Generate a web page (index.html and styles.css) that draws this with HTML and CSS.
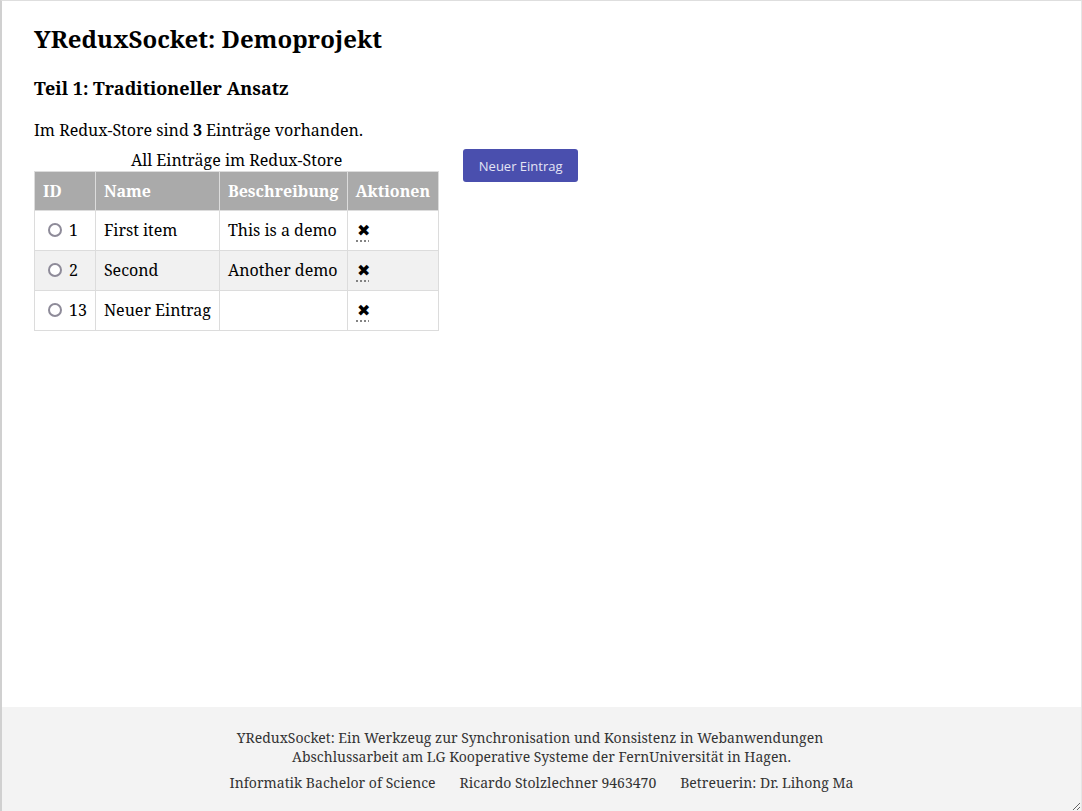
FILE: index.html
```html
<!DOCTYPE html>
<html lang="de">
<head>
<meta charset="utf-8">
<title>YReduxSocket: Demoprojekt</title>
<link rel="stylesheet" href="styles.css">
</head>
<body>
<div class="frame">
  <main class="content">
    <h1 class="title">YReduxSocket: Demoprojekt</h1>
    <h2 class="subtitle">Teil 1: Traditioneller Ansatz</h2>
    <p class="summary">Im Redux-Store sind <b>3</b> Einträge vorhanden.</p>
    <div class="store-row">
      <table class="items">
        <caption>All Einträge im Redux-Store</caption>
        <thead>
          <tr><th>ID</th><th>Name</th><th>Beschreibung</th><th>Aktionen</th></tr>
        </thead>
        <tbody>
          <tr><td><input type="radio" name="sel">1</td><td>First item</td><td>This is a demo</td><td><abbr title="Löschen">✖</abbr></td></tr>
          <tr><td><input type="radio" name="sel">2</td><td>Second</td><td>Another demo</td><td><abbr title="Löschen">✖</abbr></td></tr>
          <tr><td><input type="radio" name="sel">13</td><td>Neuer Eintrag</td><td></td><td><abbr title="Löschen">✖</abbr></td></tr>
        </tbody>
      </table>
      <button class="add-btn" type="button">Neuer Eintrag</button>
    </div>
  </main>
  <footer class="footer">
    <p class="footer-title"><span class="line-1">YReduxSocket: Ein Werkzeug zur Synchronisation und Konsistenz in Webanwendungen</span><span class="line-2">Abschlussarbeit am LG Kooperative Systeme der FernUniversität in Hagen.</span></p>
    <p class="footer-meta"><span>Informatik Bachelor of Science</span><span>Ricardo Stolzlechner 9463470</span><span>Betreuerin: Dr. Lihong Ma</span></p>
  </footer>
</div>
</body>
</html>
```
FILE: styles.css
```css
html, body {
  margin: 0;
  padding: 0;
  height: 100%;
}
body {
  font-family: "Noto Serif", "DejaVu Serif", serif;
  color: #000;
  background: #fff;
}
.frame {
  box-sizing: border-box;
  height: 100vh;
  display: flex;
  flex-direction: column;
  border-top: 1px solid #dedede;
  border-left: 2px solid #d0d0d0;
  border-right: 1px solid #e6e6e6;
  resize: both;
  overflow: auto;
}
.content {
  flex: 1;
  padding: 1px 32px 0;
}
.title {
  font-size: 24px;
  font-weight: bold;
  margin: 21px 0 0;
  line-height: 32px;
}
.subtitle {
  font-size: 18px;
  font-weight: bold;
  margin: 20px 0 0;
  line-height: 26px;
}
.summary {
  font-size: 16px;
  margin: 17px 0 0;
  line-height: 24px;
}
.store-row {
  display: flex;
  align-items: flex-start;
  gap: 24px;
  margin-top: 7px;
}
.items {
  border-collapse: collapse;
  font-size: 16px;
}
.items caption {
  line-height: 22px;
}
.items th, .items td {
  border: 1px solid #dcdcdc;
  padding: 8px;
  text-align: left;
  line-height: 23px;
  white-space: nowrap;
}
.items th {
  padding-bottom: 7px;
  background: #aaaaaa;
  color: #fff;
  font-weight: bold;
}
.items tbody tr:nth-child(2) td {
  background: #f1f1f1;
}
.items input[type="radio"] {
  appearance: none;
  -webkit-appearance: none;
  box-sizing: border-box;
  width: 14px;
  height: 14px;
  border: 2px solid #8e8b99;
  border-radius: 50%;
  background: #fff;
  margin: 0 7px 0 5px;
  vertical-align: -1px;
}
.items abbr {
  text-decoration: underline dotted;
  text-underline-offset: 5px;
  text-decoration-color: #666;
  padding-left: 1px;
}
.add-btn {
  margin-top: 0;
  font-family: "Open Sans", "Noto Sans", sans-serif;
  font-size: 13px;
  color: #e4e4f4;
  background: #4a4fae;
  border: none;
  border-radius: 3px;
  padding: 0;
  height: 33px;
  width: 115px;
  white-space: nowrap;
}
.footer {
  background: #f3f3f3;
  text-align: center;
  color: #333;
  font-size: 14px;
  padding: 21px 0 18px;
}
.footer p {
  margin: 0;
}
.footer-title {
  line-height: 19px;
}
.line-1, .line-2 {
  display: block;
}
.line-1 {
  padding-right: 23px;
}
.footer-meta {
  margin-top: 7px !important;
  display: flex;
  justify-content: center;
  gap: 24px;
  line-height: 20px;
}
```
